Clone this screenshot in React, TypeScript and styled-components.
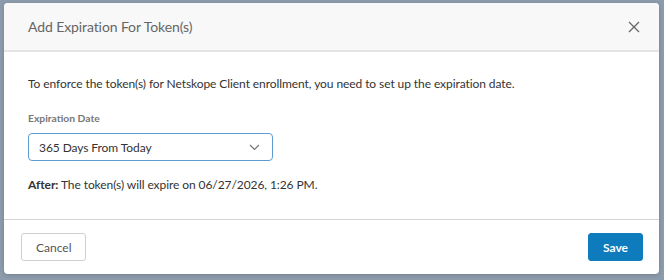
import React from 'react';
import styled, { createGlobalStyle } from 'styled-components';

const GlobalStyle = createGlobalStyle`
  html, body {
    margin: 0;
    padding: 0;
    background: #8d9cad;
  }
  body {
    font-family: Lato, "Noto Sans", sans-serif;
  }
`;

const Backdrop = styled.div`
  width: 664px;
  height: 280px;
  box-sizing: border-box;
  padding: 3px 5px 6px 4px;
`;

const Modal = styled.div`
  display: flex;
  flex-direction: column;
  height: 100%;
  background: #fff;
  border-radius: 4px;
  overflow: hidden;
  box-shadow: 0 1px 4px rgba(0, 0, 0, 0.2);
`;

const Header = styled.div`
  display: flex;
  align-items: center;
  justify-content: space-between;
  height: 47px;
  padding: 0 14px 0 24px;
  background: #f8f8f8;
  border-bottom: 2px solid #e4e4e4;
  flex-shrink: 0;
`;

const Title = styled.h2`
  margin: 0;
  font-size: 14px;
  font-weight: 400;
  letter-spacing: -0.1px;
  color: #666;
`;

const CloseButton = styled.button`
  display: flex;
  align-items: center;
  justify-content: center;
  width: 22px;
  height: 22px;
  padding: 0;
  border: none;
  background: none;
  cursor: pointer;
`;

const Body = styled.div`
  flex: 1;
  padding: 23px 24px 0;
  color: #333;
  font-size: 12px;
  letter-spacing: -0.08px;
`;

const Intro = styled.p`
  margin: 0 0 19px;
  line-height: 18px;
`;

const Label = styled.div`
  font-size: 10.3px;
  font-weight: 700;
  letter-spacing: 0;
  color: #777;
  margin-bottom: 9px;
`;

const Select = styled.div`
  display: flex;
  align-items: center;
  justify-content: space-between;
  width: 245px;
  height: 28px;
  box-sizing: border-box;
  padding: 0 12px 0 10px;
  border: 1px solid #5d9bd1;
  border-radius: 4px;
  font-size: 12px;
  color: #333;
`;

const Result = styled.p`
  margin: 15px 0 0;
  line-height: 18px;
  strong {
    font-weight: 700;
  }
`;

const Footer = styled.div`
  display: flex;
  align-items: center;
  justify-content: space-between;
  height: 55px;
  box-sizing: border-box;
  padding: 0 16px 0 17px;
  border-top: 1px solid #d4d4d4;
  flex-shrink: 0;
`;

const Button = styled.button<{ $primary?: boolean }>`
  height: 28px;
  padding: 0 14px;
  border-radius: 3px;
  font-family: Lato, "Noto Sans", sans-serif;
  font-size: 12px;
  font-weight: ${(p) => (p.$primary ? 700 : 400)};
  color: ${(p) => (p.$primary ? '#fff' : '#555')};
  background: ${(p) => (p.$primary ? '#0e7bbd' : '#fff')};
  border: 1px solid ${(p) => (p.$primary ? '#0e7bbd' : '#cfcfcf')};
  cursor: pointer;
`;

export default function App() {
  return (
    <>
      <GlobalStyle />
      <Backdrop>
        <Modal>
          <Header>
            <Title>Add Expiration For Token(s)</Title>
            <CloseButton aria-label="Close">
              <svg width="12" height="12" viewBox="0 0 12 12">
                <path d="M1 1L11 11M11 1L1 11" stroke="#666" strokeWidth="1.3" fill="none" />
              </svg>
            </CloseButton>
          </Header>
          <Body>
            <Intro>
              To enforce the token(s) for Netskope Client enrollment, you need to set up the expiration date.
            </Intro>
            <Label>Expiration Date</Label>
            <Select>
              <span>365 Days From Today</span>
              <svg width="11" height="7" viewBox="0 0 11 7">
                <path d="M1 1L5.5 5.5L10 1" stroke="#777" strokeWidth="1.2" fill="none" />
              </svg>
            </Select>
            <Result>
              <strong>After:</strong> The token(s) will expire on 06/27/2026, 1:26 PM.
            </Result>
          </Body>
          <Footer>
            <Button>Cancel</Button>
            <Button $primary>Save</Button>
          </Footer>
        </Modal>
      </Backdrop>
    </>
  );
}
